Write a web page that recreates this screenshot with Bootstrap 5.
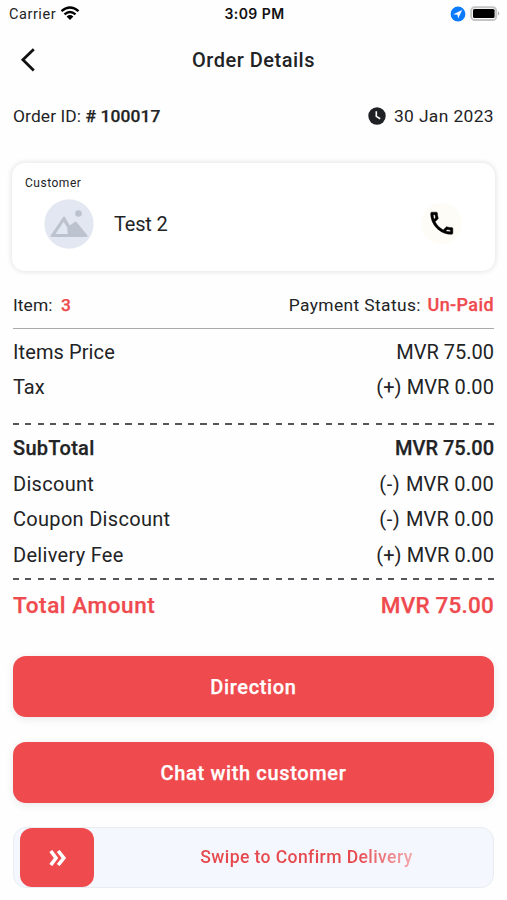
<!DOCTYPE html>
<html lang="en">
<head>
<meta charset="utf-8">
<meta name="viewport" content="width=device-width, initial-scale=1">
<title>Order Details</title>
<link href="https://cdn.jsdelivr.net/npm/bootstrap@5.3.0/dist/css/bootstrap.min.css" rel="stylesheet">
<style>
  :root { --brand: #ef4a4e; --ink: #222325; }
  body { font-family: Roboto, "Liberation Sans", sans-serif; color: var(--ink); background: #fefefe; }
  .screen { width: 507px; height: 900px; padding: 0 13px; overflow: hidden; }
  .fw-med { font-weight: 500; -webkit-text-stroke: .25px currentColor; }
  .brand { color: var(--brand); }
  .ls-1 { letter-spacing: .1px; }
  .ls-2 { letter-spacing: .2px; }
  .ls-3 { letter-spacing: .3px; }
  .ls-4 { letter-spacing: .38px; }
  .ls-6 { letter-spacing: .57px; }
  .ls-8 { letter-spacing: .4px; }
  .status { height: 27px; margin: 0 -6px 0 -4px; font-size: 14.5px; line-height: 27px; }
  .status .side { flex: 1 1 0; }
  .carrier { letter-spacing: .55px; padding-top: 1px; }
  .clock-text { font-family: Inter, sans-serif; font-size: 14px; font-weight: 600; letter-spacing: .45px; color: #111; }
  .title-bar { height: 66px; }
  .title-bar h1 { font-size: 20px; font-weight: 500; letter-spacing: .5px; }
  .title-bar .side { width: 60px; }
  .order-row { height: 46px; font-size: 17.4px; }
  .customer { height: 108px; margin: 24px -1px 0; border: 0; border-radius: 13px; background: #fff; box-shadow: 0 0 5px 1px rgba(0,0,0,.1); }
  .customer-label { font-size: 12px; line-height: 14px; padding: 13px 0 0 13px; letter-spacing: .52px; }
  .customer-row { height: 50px; padding: 0 32px; margin-top: 9px; }
  .customer-name { font-size: 20px; letter-spacing: -.2px; margin-left: 20px; }
  .meta-row { height: 58px; padding-top: 11px; font-size: 17.4px; border-bottom: 1px solid #aaa; }
  .paid-state { font-size: 18px; }
  .line-row { height: 35.5px; font-size: 20px; line-height: 35.5px; }
  .rows-a { padding: 5.5px 0 17.5px; }
  .rows-b { padding: 6px 0 5px; }
  .dash { height: 2px; background: repeating-linear-gradient(90deg, #55565a 0 6px, transparent 6px 12.5px); }
  .total { height: 52px; font-size: 22.5px; line-height: 50px; }
  .btn-main { height: 61px; border: 0; border-radius: 13px; background: var(--brand); color: #fff; font-size: 20px; font-weight: 500; letter-spacing: .65px; -webkit-text-stroke: .25px #fff; box-shadow: 0 2px 9px rgba(0,0,0,.09); }
  .btn-main + .btn-main { margin-top: 25px; }
  .swipe { height: 61px; border: 1px solid #e9edf2; border-radius: 13px; background: #f4f7fd; padding-left: 6px; }
  .knob { width: 74px; height: 59px; border-radius: 12px; background: var(--brand); padding-left: 2px; }
  .swipe-label { padding-left: 26px; }
  .swipe-text { font-size: 17.6px; font-weight: 500; letter-spacing: .39px; background: linear-gradient(90deg, #e5484d 0 72%, #f2a9ad 100%); -webkit-background-clip: text; background-clip: text; color: transparent; }
</style>
</head>
<body>
<main class="screen d-flex flex-column">
  <div class="status d-flex align-items-center">
    <div class="side d-flex align-items-center">
      <span class="carrier">Carrier</span>
      <svg class="ms-1" width="20" height="15" viewBox="0 0 20 15"><g fill="none" stroke="#000" stroke-width="2.4"><path d="M1.5 5.2Q10-2 18.5 5.2"/><path d="M4.5 8.4Q10 3.8 15.5 8.4"/></g><path d="M6.6 10.4Q10 7.6 13.4 10.4L10 14Z"/></svg>
    </div>
    <span class="clock-text">3:09 PM</span>
    <div class="side d-flex align-items-center justify-content-end">
      <svg width="16" height="16" viewBox="0 0 16 16"><circle cx="8" cy="8" r="7.4" fill="#0a7aff"/><path d="M12.2 4 3.2 8.3 7.5 8.7 8.1 12.6Z" fill="#fff"/></svg>
      <svg class="ms-1" width="30" height="16" viewBox="0 0 30 16"><rect x="1.2" y="1.2" width="25" height="12.8" rx="3.6" fill="#fff" stroke="#c4c4c4" stroke-width="2"/><rect x="3" y="3" width="21.6" height="9" rx="1.5"/><path d="M28 5.6q2.6 2 0 4z" fill="#aaa"/></svg>
    </div>
  </div>

  <header class="title-bar d-flex align-items-center justify-content-between">
    <div class="side d-flex"><svg width="30" height="30" viewBox="0 0 30 30"><path d="M20.8 4.2 9.9 14.8 20.8 25.4" fill="none" stroke="#111" stroke-width="2.8"/></svg></div>
    <h1 class="m-0">Order Details</h1>
    <div class="side"></div>
  </header>

  <div class="order-row d-flex align-items-center justify-content-between">
    <div><span class="ls-1">Order ID:</span> <span class="fw-med ls-1"># 100017</span></div>
    <div class="d-flex align-items-center"><svg class="me-2" width="18" height="18" viewBox="0 0 18 18"><circle cx="9" cy="9" r="8.7" fill="#202124"/><path d="M8.3 4.3V9.4L12.2 11.7" fill="none" stroke="#fff" stroke-width="1.6"/></svg><span class="ls-4">30 Jan 2023</span></div>
  </div>

  <section class="customer card">
    <div class="customer-label">Customer</div>
    <div class="customer-row d-flex align-items-center">
      <svg width="50" height="50" viewBox="0 0 50 50"><circle cx="25" cy="25" r="24.7" fill="#e3e7f1"/><circle cx="34.5" cy="14.5" r="3.3" fill="#bcc3cf"/><path d="M7.5 37 20 18.5 25.5 28 31.5 23.5 42.5 37Z" fill="#bcc3cf" stroke="#bcc3cf" stroke-width="2" stroke-linejoin="round"/><path d="M11.5 35 19.7 22.8 23.2 28.5 23.8 35Z" fill="#e3e7f1"/></svg>
      <span class="customer-name">Test 2</span>
      <svg class="ms-auto" width="42" height="42" viewBox="0 0 42 42"><circle cx="20.5" cy="20.5" r="20.5" fill="#fdfcf7"/><g transform="translate(6 5.5) scale(1.23)"><path stroke="#000" stroke-width=".4" d="M6.54 5c.06.89.21 1.76.45 2.59l-1.2 1.2c-.41-1.2-.67-2.47-.76-3.79h1.51m9.86 12.02c.85.24 1.72.39 2.6.45v1.49c-1.32-.09-2.59-.35-3.8-.75l1.2-1.19M7.5 3H4c-.55 0-1 .45-1 1 0 9.39 7.61 17 17 17 .55 0 1-.45 1-1v-3.49c0-.55-.45-1-1-1-1.24 0-2.45-.2-3.57-.57-.1-.04-.21-.05-.31-.05-.26 0-.51.1-.71.29l-2.2 2.2c-2.83-1.45-5.15-3.76-6.59-6.59l2.2-2.2c.28-.28.36-.67.25-1.02C8.7 6.45 8.5 5.25 8.5 4c0-.55-.45-1-1-1z"/></g></svg>
    </div>
  </section>

  <div class="meta-row d-flex align-items-center justify-content-between">
    <div><span class="ls-1">Item:</span> <span class="brand fw-med ms-1">3</span></div>
    <div><span class="ls-4">Payment Status:</span> <span class="brand fw-med ls-8 paid-state">&#8202;Un-Paid</span></div>
  </div>

  <div class="rows-a">
    <div class="line-row d-flex justify-content-between"><span class="ls-1">Items Price</span><span>MVR 75.00</span></div>
    <div class="line-row d-flex justify-content-between"><span>Tax</span><span class="ls-1">(+) MVR 0.00</span></div>
  </div>
  <div class="dash"></div>
  <div class="rows-b">
    <div class="line-row fw-med d-flex justify-content-between"><span class="ls-3">SubTotal</span><span>MVR 75.00</span></div>
    <div class="line-row d-flex justify-content-between"><span class="ls-3">Discount</span><span><span class="ls-6">(-) </span><span class="ls-2">MVR 0.00</span></span></div>
    <div class="line-row d-flex justify-content-between"><span class="ls-3">Coupon Discount</span><span><span class="ls-6">(-) </span><span class="ls-2">MVR 0.00</span></span></div>
    <div class="line-row d-flex justify-content-between"><span class="ls-3">Delivery Fee</span><span class="ls-1">(+) MVR 0.00</span></div>
  </div>
  <div class="dash"></div>
  <div class="total brand fw-med d-flex justify-content-between"><span class="ls-6">Total Amount</span><span class="ls-2">MVR 75.00</span></div>

  <div class="actions d-grid mt-4">
    <button type="button" class="btn btn-main">Direction</button>
    <button type="button" class="btn btn-main">Chat with customer</button>
    <div class="swipe d-flex align-items-center mt-4">
      <div class="knob d-flex align-items-center justify-content-center flex-shrink-0"><svg width="18" height="16" viewBox="0 0 18 16"><path d="M1.8 1 7 8 1.8 15M9.2 1 14.8 8 9.2 15" fill="none" stroke="#fff" stroke-width="3.6"/></svg></div>
      <div class="swipe-label flex-fill text-center"><span class="swipe-text">Swipe to Confirm Delivery</span></div>
    </div>
  </div>
</main>
<script src="https://cdn.jsdelivr.net/npm/bootstrap@5.3.0/dist/js/bootstrap.bundle.min.js"></script>
</body>
</html>
